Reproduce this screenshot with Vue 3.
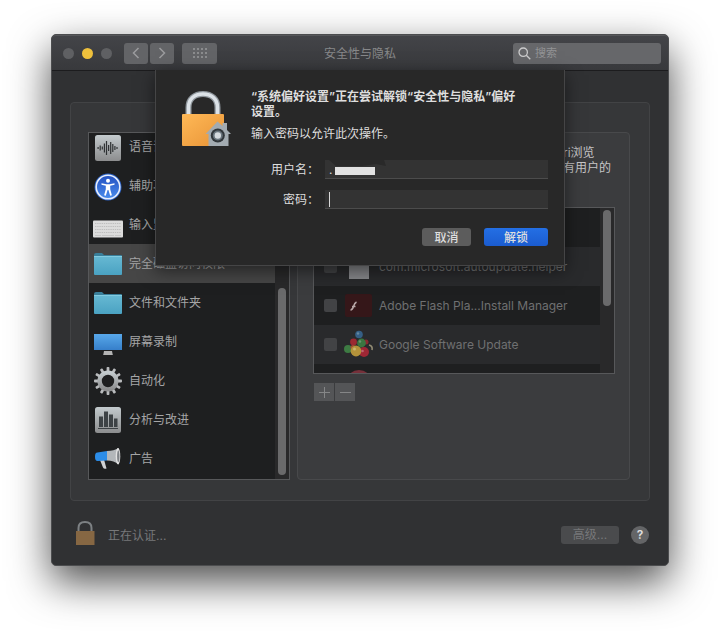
<script setup>
import { ref } from 'vue'

// 左侧隐私类别
const categories = [
  { id: 'speech', name: '语音识别' },
  { id: 'access', name: '辅助功能' },
  { id: 'keyboard', name: '输入监控' },
  { id: 'disk', name: '完全磁盘访问权限' },
  { id: 'files', name: '文件和文件夹' },
  { id: 'screen', name: '屏幕录制' },
  { id: 'auto', name: '自动化' },
  { id: 'stats', name: '分析与改进' },
  { id: 'ads', name: '广告' }
]
const current = ref('disk')

// 右侧应用列表
const apps = ref([
  { id: 'first', name: '', checked: false },
  { id: 'helper', name: 'com.microsoft.autoupdate.helper', checked: false },
  { id: 'flash', name: 'Adobe Flash Pla...Install Manager', checked: false },
  { id: 'google', name: 'Google Software Update', checked: false },
  { id: 'last', name: '', checked: false }
])

const username = ref('.')
const password = ref('')
const keyword = ref('')

const teeth = Array.from({ length: 12 }, (_, i) => i * 30)
const wave = [2, 5, 3, 9, 14, 6, 12, 8, 4, 2]
</script>

<template>
  <div class="page">
    <div class="window">
      <!-- 工具栏 -->
      <header class="toolbar">
        <div class="lights">
          <span class="light"></span>
          <span class="light yellow"></span>
          <span class="light"></span>
        </div>
        <div class="nav">
          <button class="tool" aria-label="后退">
            <svg width="8" height="12" viewBox="0 0 8 12"><path d="M6.5 1L1.5 6l5 5" /></svg>
          </button>
          <button class="tool" aria-label="前进">
            <svg width="8" height="12" viewBox="0 0 8 12"><path d="M1.5 1l5 5-5 5" /></svg>
          </button>
        </div>
        <button class="tool wide" aria-label="显示全部">
          <svg width="14" height="10" viewBox="0 0 14 10">
            <template v-for="y in 3" :key="y">
              <rect v-for="x in 4" :key="x" :x="x * 4 - 4" :y="y * 4 - 4" width="2" height="2" />
            </template>
          </svg>
        </button>
        <h1 class="title">安全性与隐私</h1>
        <label class="search">
          <svg width="13" height="13" viewBox="0 0 13 13"><circle cx="5.2" cy="5.2" r="4.2" /><path d="M8.3 8.3l4 4" /></svg>
          <input v-model="keyword" type="text" placeholder="搜索" aria-label="搜索">
        </label>
      </header>

      <main class="content">
        <div class="panel">
          <!-- 类别 -->
          <div class="list categories">
            <ul class="rows">
              <li
                v-for="c in categories"
                :key="c.id"
                class="row"
                :class="{ selected: c.id === current }"
                @click="current = c.id"
              >
                <svg class="icon" width="30" height="30" viewBox="0 0 30 30">
                  <g v-if="c.id === 'speech'">
                    <rect x="2" y="3" width="26" height="26" rx="2.5" fill="url(#silver)" />
                    <rect
                      v-for="(h, i) in wave"
                      :key="i"
                      :x="4.5 + i * 2.1"
                      :y="16 - h / 2"
                      width="1.2"
                      :height="h"
                      fill="#2f3234"
                    />
                  </g>
                  <g v-else-if="c.id === 'access'">
                    <circle cx="15" cy="16" r="13.5" fill="#2a62c8" />
                    <circle cx="15" cy="16" r="11.8" fill="url(#blueball)" stroke="#e8eefa" stroke-width="1.6" />
                    <circle cx="15" cy="9.8" r="2" fill="#fff" />
                    <path d="M8.5 12.2l4.8 1h3.4l4.8-1v1.5l-4.3 1.1v3.4l1.7 6-1.7.5L15.4 19h-.8l-1.8 5.7-1.7-.5 1.7-6v-3.4l-4.3-1.1z" fill="#fff" />
                  </g>
                  <g v-else-if="c.id === 'keyboard'">
                    <rect x="0" y="10.5" width="30" height="17" rx="1" fill="#dcdcdc" />
                    <path d="M2 13.5h26M2 16.5h26M2 19.5h26M2 22.5h26" stroke="#bebebe" stroke-dasharray="1.4 .8" />
                    <path d="M2 25.5h6M9 25.5h12M22 25.5h6" stroke="#c6c6c6" />
                  </g>
                  <g v-else-if="c.id === 'disk' || c.id === 'files'">
                    <path d="M1 6q0-2 2-2h6l2 2h17q1 0 1 1v5H1z" fill="#397f9a" />
                    <rect x="1" y="7" width="28" height="19" rx="1" fill="url(#folder)" />
                    <path d="M1 7.5h28" stroke="#82cbe0" />
                  </g>
                  <g v-else-if="c.id === 'screen'">
                    <rect x="1" y="7" width="28" height="16" fill="url(#display)" />
                    <path d="M11 24h8l.8 4h-9.6z" fill="#b4b4b4" />
                  </g>
                  <g v-else-if="c.id === 'auto'">
                    <rect
                      v-for="t in teeth"
                      :key="t"
                      x="13.6"
                      y="1"
                      width="2.8"
                      height="6"
                      rx=".8"
                      fill="#b9bbbd"
                      :transform="`rotate(${t} 15 15)`"
                    />
                    <circle cx="15" cy="15" r="8.4" fill="none" stroke="url(#silver)" stroke-width="4.4" />
                  </g>
                  <g v-else-if="c.id === 'stats'">
                    <rect x="2" y="2" width="26" height="26" rx="2.5" fill="url(#silver)" />
                    <path d="M6 11.5h4V22H6zM11 6.5h4V22h-4zM16 9.5h4V22h-4zM21 13.5h3.5V22H21z" fill="#3d4245" />
                    <path d="M5 23.5h20" stroke="#3d4245" />
                  </g>
                  <g v-else>
                    <path d="M7 16l4-.5 2.5 9q-2.5 1-3.5-1z" fill="#d0d2d4" />
                    <path d="M4.5 8.5L14 7v9.5L4.5 17Q2 17 2 12.7t2.5-4.2z" fill="#2c8de8" />
                    <path d="M14 7q7 0 11.5-3v16.5Q21 16.5 14 16.5z" fill="#b3b7ba" />
                    <ellipse cx="25" cy="12.2" rx="2.3" ry="8.2" fill="#e2e2e2" />
                    <ellipse cx="25.3" cy="12.2" rx="1.2" ry="6" fill="#808488" />
                  </g>
                </svg>
                <span>{{ c.name }}</span>
              </li>
            </ul>
            <div class="track"><div class="thumb long"></div></div>
          </div>

          <!-- 应用 -->
          <section class="detail">
            <p class="note">ri浏览<br>有用户的</p>
            <div class="list apps">
              <ul class="rows">
                <li v-for="a in apps" :key="a.id" class="row">
                  <label class="app">
                    <input v-model="a.checked" type="checkbox" disabled :aria-label="a.name || '应用'">
                    <svg class="app-icon" width="30" height="30" viewBox="0 0 30 30">
                      <rect v-if="a.id === 'helper'" x="5" y="7" width="20" height="20" fill="#86878a" />
                      <g v-else-if="a.id === 'flash'">
                        <rect x="1" y="3" width="27" height="23" rx="2" fill="#351719" />
                        <path d="M6.5 19q2 0 3-3.5t3-4.5M8 15.5h3.5" fill="none" stroke="#b9a9a9" stroke-width="1.5" />
                      </g>
                      <g v-else-if="a.id === 'google'">
                        <path d="M25 15q4 1 3 5" fill="none" stroke="#928c74" stroke-width="1.6" />
                        <circle cx="15" cy="4.5" r="3.8" fill="#355f85" />
                        <circle cx="22" cy="12" r="2.5" fill="#8b2930" />
                        <circle cx="9.5" cy="12" r="3.4" fill="#9b2931" />
                        <circle cx="17.5" cy="13" r="4.4" fill="#3b7540" />
                        <circle cx="4" cy="19" r="4" fill="#3d7b43" />
                        <circle cx="9" cy="17.5" r="2.5" fill="#a34a32" />
                        <circle cx="20" cy="22" r="5" fill="#9f2735" />
                        <circle cx="12" cy="21" r="5.4" fill="#b3923a" />
                        <circle cx="14" cy="3.5" r="1.2" fill="#6787a0" />
                        <circle cx="16" cy="11.5" r="1.2" fill="#6a956d" />
                        <circle cx="10.5" cy="19" r="1.5" fill="#cbb56d" />
                        <circle cx="18.5" cy="21" r="1.3" fill="#bd6670" />
                      </g>
                      <circle v-else-if="a.id === 'last'" cx="15" cy="14" r="13" fill="#76303a" />
                    </svg>
                    <span>{{ a.name }}</span>
                  </label>
                </li>
              </ul>
              <div class="track"><div class="thumb short"></div></div>
            </div>
            <div class="edit">
              <button aria-label="添加" disabled><svg width="11" height="11" viewBox="0 0 11 11"><path d="M0 5.5h11M5.5 0v11" /></svg></button>
              <button aria-label="移除" disabled><svg width="11" height="11" viewBox="0 0 11 11"><path d="M0 5.5h11" /></svg></button>
            </div>
          </section>
        </div>

        <!-- 授权对话框 -->
        <form class="dialog" @submit.prevent>
          <svg class="lock" width="52" height="56" viewBox="0 0 52 56">
            <path d="M7.5 26V16.5C7.5 8 13.5 3 22 3s14.5 5 14.5 13.5V26" fill="none" stroke="#8f969c" stroke-width="6" />
            <path d="M7.5 26V16.5C7.5 8 13.5 3 22 3s14.5 5 14.5 13.5V26" fill="none" stroke="#dce2e7" stroke-width="3.5" />
            <rect x="1" y="23" width="42" height="32" rx="1" fill="url(#gold)" />
            <path d="M36.5 30.5l5 4.5v-3H46v7l4 4h-2.5v12h-20V43h-3z" fill="#a3abb1" />
            <circle cx="36.8" cy="44.5" r="7" fill="#31363a" />
            <circle cx="36.8" cy="44.5" r="5" fill="#69747c" />
            <circle cx="36.8" cy="44.5" r="3.2" fill="#d5dade" />
          </svg>
          <div class="dialog-body">
            <h2>“系统偏好设置”正在尝试解锁“安全性与隐私”偏好设置。</h2>
            <p>输入密码以允许此次操作。</p>
          </div>
          <div class="fields">
            <label for="user">用户名：</label>
            <div class="field">
              <input id="user" v-model="username" type="text">
              <svg class="mask" width="60" height="18" viewBox="0 0 60 18">
                <path d="M2 0h55l2 6-10-2-14 2H9z" fill="#292929" />
                <rect x="8" y="7" width="40" height="8" fill="#e2e2e2" />
              </svg>
            </div>
            <label for="pwd">密码：</label>
            <div class="field">
              <input id="pwd" v-model="password" type="password">
              <span class="caret"></span>
            </div>
          </div>
          <div class="actions">
            <button type="button" class="cancel">取消</button>
            <button type="submit" class="unlock">解锁</button>
          </div>
        </form>
      </main>

      <!-- 底部 -->
      <footer class="footer">
        <svg class="small-lock" width="20" height="26" viewBox="0 0 20 26">
          <path d="M3.5 12V8Q3.5 2 10 2t6.5 6v4" fill="none" stroke="#7d8184" stroke-width="2" />
          <rect x="1" y="11" width="18.5" height="14" fill="#866743" />
        </svg>
        <span class="status">正在认证...</span>
        <button class="advanced" disabled>高级...</button>
        <button class="help">?</button>
      </footer>
    </div>

    <!-- 图标共用的渐变 -->
    <svg class="defs" width="0" height="0">
      <defs>
        <linearGradient id="silver" x1="0" y1="0" x2="0" y2="1">
          <stop offset="0" stop-color="#c3cacd" />
          <stop offset="1" stop-color="#8c8d8e" />
        </linearGradient>
        <linearGradient id="folder" x1="0" y1="0" x2="0" y2="1">
          <stop offset="0" stop-color="#67b9d3" />
          <stop offset="1" stop-color="#4aa2c2" />
        </linearGradient>
        <linearGradient id="display" x1="0" y1="0" x2="0" y2="1">
          <stop offset="0" stop-color="#58a8ea" />
          <stop offset="1" stop-color="#367fca" />
        </linearGradient>
        <linearGradient id="blueball" x1="0" y1="0" x2="0" y2="1">
          <stop offset="0" stop-color="#2350c0" />
          <stop offset="1" stop-color="#4a8ced" />
        </linearGradient>
        <linearGradient id="gold" x1="0" y1="0" x2="1" y2="1">
          <stop offset="0" stop-color="#ffb957" />
          <stop offset="1" stop-color="#e89336" />
        </linearGradient>
      </defs>
    </svg>
  </div>
</template>

<style>
body {
  margin: 0;
  background: #fff;
}
</style>

<style scoped>
.page {
  padding: 34px 51px 68px;
  overflow: hidden;
  font-family: Inter, "Noto Sans CJK SC", sans-serif;
  font-size: 12px;
  line-height: 15px;
}

.page *,
.page {
  box-sizing: border-box;
}

button,
input {
  padding: 0;
  border: none;
  font: inherit;
  color: inherit;
}

h1,
h2,
p,
ul {
  margin: 0;
  padding: 0;
}

.window {
  border: 1px solid #4c4d4f;
  border-radius: 5px;
  background: #303133;
  box-shadow: 0 16px 40px rgba(0, 0, 0, 0.7);
}

.toolbar {
  position: relative;
  display: flex;
  align-items: center;
  height: 36px;
  padding: 0 7px 0 11px;
  border-top: 1px solid #56575a;
  border-bottom: 1px solid #1c1c1e;
  border-radius: 4px 4px 0 0;
  background: linear-gradient(#434448, #38393c);
}

.lights {
  display: flex;
  gap: 8px;
  margin-right: 12px;
}

.light {
  width: 11px;
  height: 11px;
  border-radius: 50%;
  background: #5f6063;
}

.light.yellow {
  background: #eec03c;
}

.nav {
  display: flex;
  gap: 2px;
  margin-right: 8px;
}

.tool {
  display: flex;
  align-items: center;
  justify-content: center;
  width: 24px;
  height: 21px;
  border-radius: 3px;
  background: #636467;
}

.tool.wide {
  width: 35px;
}

.tool path {
  fill: none;
  stroke: #9b9c9e;
  stroke-width: 1.5;
}

.tool rect {
  fill: #8b8c8e;
}

.title {
  position: absolute;
  left: 50%;
  transform: translateX(-50%);
  font-size: 12px;
  font-weight: 400;
  color: #87888a;
}

.search {
  display: flex;
  align-items: center;
  gap: 4px;
  width: 148px;
  height: 21px;
  margin-left: auto;
  padding: 0 5px;
  border-radius: 3px;
  background: #66676a;
}

.search svg {
  flex: none;
  fill: none;
  stroke: #cbcbcc;
  stroke-width: 1.3;
}

.search input {
  flex: 1;
  min-width: 0;
  background: none;
  outline: none;
  font-size: 11px;
}

.search input::placeholder {
  color: #929395;
  opacity: 1;
}

.content {
  position: relative;
  padding: 31px 18px 0;
}

.panel {
  display: grid;
  grid-template-columns: 202px 1fr;
  gap: 7px;
  padding: 29px 19px 20px 17px;
  border: 1px solid #424345;
  border-radius: 4px;
  background: #363739;
}

.list {
  display: flex;
  overflow: hidden;
  border: 1px solid #57585a;
  background: #1e1f20;
}

.categories {
  height: 348px;
  color: #a5a5a6;
}

.rows {
  flex: 1;
  min-width: 0;
  list-style: none;
}

.categories .rows {
  margin-top: -6px;
}

.row {
  display: flex;
  align-items: center;
  height: 39px;
  white-space: nowrap;
}

.categories .row {
  gap: 6px;
  padding-left: 4px;
}

.row.selected {
  background: #464646;
}

.icon {
  flex: none;
}

.track {
  width: 14px;
  flex: none;
  padding: 2px 3px;
  background: #29292a;
}

.thumb {
  border-radius: 4px;
  background: #6a6a6b;
}

.thumb.long {
  height: 187px;
  margin-top: 153px;
}

.thumb.short {
  height: 96px;
}

.detail {
  min-width: 0;
  padding: 12px 14px 0 15px;
  border: 1px solid #48494b;
  border-radius: 4px;
  background: #3b3c3e;
}

.note {
  width: 52px;
  margin: 0 0 32px auto;
  color: #c6c6c7;
  white-space: nowrap;
}

.apps {
  height: 167px;
  color: #6f7071;
}

.apps .row {
  background: #1e1f20;
}

.apps .row:nth-child(even) {
  background: #292a2c;
}

.app {
  display: flex;
  align-items: center;
  padding-left: 10px;
}

.app input {
  appearance: none;
  width: 13px;
  height: 13px;
  margin: 0 7px 0 0;
  border-radius: 2px;
  background: #424345;
}

.app-icon {
  flex: none;
  margin-right: 5px;
}

.edit {
  display: flex;
  gap: 1px;
  margin: 9px 0 0 1px;
}

.edit button {
  display: flex;
  align-items: center;
  justify-content: center;
  width: 20px;
  height: 18px;
  background: #545557;
}

.edit path {
  stroke: #858687;
}

.dialog {
  position: absolute;
  top: -1px;
  left: 50%;
  display: grid;
  grid-template-columns: 52px 1fr;
  column-gap: 18px;
  align-content: start;
  width: 410px;
  height: 196px;
  padding: 19px 16px 17px 25px;
  border: 1px solid #454546;
  border-top: none;
  background: #282828;
  color: #dedede;
  box-shadow: 0 5px 16px rgba(0, 0, 0, 0.5);
  transform: translateX(-50%);
}

.lock {
  margin-top: 2px;
}

.dialog-body h2 {
  margin-bottom: 7px;
  padding-right: 28px;
  font-size: 12px;
  font-weight: 600;
}

.fields {
  grid-column: 1 / 3;
  display: grid;
  grid-template-columns: 1fr 223px;
  gap: 11px 6px;
  align-items: center;
  margin-top: 13px;
}

.fields label {
  text-align: right;
}

.field {
  position: relative;
}

.field input {
  display: block;
  width: 100%;
  height: 19px;
  padding: 0 4px;
  border-bottom: 1px solid #4c4c4c;
  background: #333;
  outline: none;
}

.mask {
  position: absolute;
  top: 0;
  left: 2px;
}

.caret {
  position: absolute;
  top: 2px;
  left: 4px;
  width: 1px;
  height: 15px;
  background: #d8d8d8;
}

.actions {
  grid-column: 1 / 3;
  display: flex;
  justify-content: flex-end;
  gap: 13px;
  margin-top: 19px;
}

.actions button {
  height: 18px;
  border-radius: 3px;
  font-weight: 500;
}

.actions .cancel {
  width: 49px;
  background: #5c5c5c;
}

.actions .unlock {
  width: 64px;
  background: linear-gradient(#246fe4, #1b5cd0);
}

.footer {
  display: flex;
  align-items: center;
  height: 64px;
  padding: 3px 19px 0 23px;
}

.small-lock {
  margin-bottom: 4px;
}

.status {
  margin-left: 13px;
  padding-top: 2px;
  color: #77787a;
}

.advanced {
  width: 58px;
  height: 18px;
  margin-left: auto;
  border-radius: 3px;
  background: #4a4b4d;
  color: #77787a;
}

.help {
  width: 18px;
  height: 18px;
  margin-left: 12px;
  border-radius: 50%;
  background: #646567;
  color: #e0e0e0;
  font-weight: 600;
}

.defs {
  position: absolute;
}
</style>
